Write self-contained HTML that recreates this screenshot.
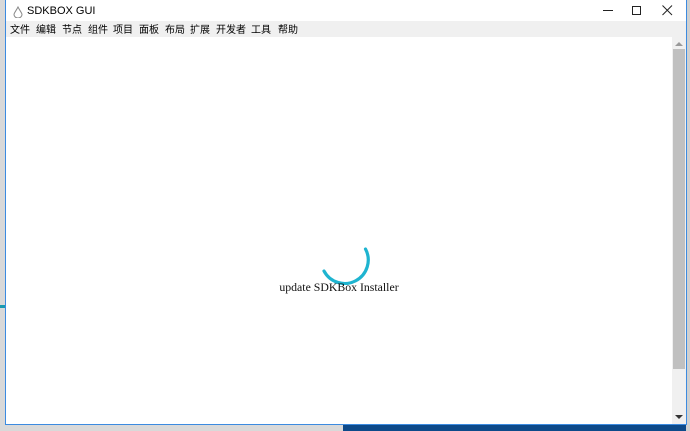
<!DOCTYPE html><html><head><style>
body{margin:0;width:690px;height:431px;overflow:hidden;position:relative;background:#d9d9d9;font-family:"Liberation Sans","Noto Sans CJK SC",sans-serif}
.desk{position:absolute;left:343px;top:380px;width:347px;height:51px;background:#0d4a8a}
.deskt{position:absolute;left:686px;top:0;width:4px;height:431px;background:#d0d0d0}
.win{position:absolute;left:5px;top:0;width:680px;height:424px;background:#fff;border:1px solid #3c8be0;border-top:none}
.title{position:absolute;left:0;top:0;width:680px;height:21px;background:#fff;font-size:11px}
.menu{position:absolute;left:0;top:21px;width:680px;height:16px;background:#f0f0f0;font-size:10px}
.menu span{position:absolute;top:3px;line-height:14px}
.sb{position:absolute;left:666px;top:37px;width:14px;height:387px;background:#f0f0f0}
.th{position:absolute;left:1px;top:12px;width:12px;height:320px;background:#c0c0c0}
.txt{position:absolute;left:0;width:666px;top:280px;text-align:center;font-family:"Liberation Serif",serif;font-size:11.8px;color:#111}
</style></head><body>
<div class="desk"></div><div class="deskt"></div>
<div style="position:absolute;left:0;top:305px;width:5px;height:3px;background:#1a9ab0"></div>
<div class="win">
<div class="title">
<svg style="position:absolute;left:7px;top:6px" width="10" height="12"><path d="M5 1 C3 5 1 7 1 8.5 A4 3.5 0 0 0 9 8.5 C9 7 7 5 5 1Z" fill="none" stroke="#888" stroke-width="1"/></svg>
<span style="position:absolute;left:21px;top:5px">SDKBOX GUI</span>
<div style="position:absolute;left:597px;top:10px;width:10px;height:1px;background:#222"></div>
<div style="position:absolute;left:626px;top:6px;width:7px;height:7px;border:1px solid #222"></div>
<svg style="position:absolute;left:656px;top:5px" width="11" height="11"><path d="M0.5 0.5L10 10M10 0.5L0.5 10" stroke="#222" stroke-width="1"/></svg>
</div>
<div class="menu"><span style="left:4px">文件</span><span style="left:30px">编辑</span><span style="left:56px">节点</span><span style="left:82px">组件</span><span style="left:107px">项目</span><span style="left:133px">面板</span><span style="left:159px">布局</span><span style="left:184px">扩展</span><span style="left:210px">开发者</span><span style="left:245px">工具</span><span style="left:272px">帮助</span></div>
<div class="sb"><div class="th"></div>
<svg style="position:absolute;left:3px;top:4px" width="8" height="5"><path d="M0 5L4 1L8 5Z" fill="#999"/></svg>
<svg style="position:absolute;left:3px;top:378px" width="8" height="5"><path d="M0 0L8 0L4 4Z" fill="#333"/></svg>
</div>
<svg style="position:absolute;left:304px;top:240px" width="60" height="45"><path d="M55.5 9 A22 22 0 0 1 14 31" fill="none" stroke="#1eb4d0" stroke-width="3.2" stroke-linecap="round"/></svg>
<div class="txt">update SDKBox Installer</div>
</div>
</body></html>
